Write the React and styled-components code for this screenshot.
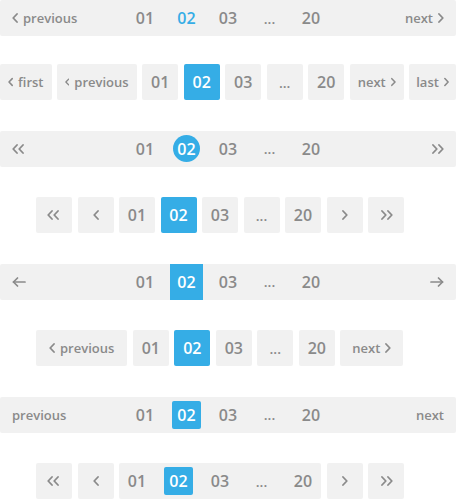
import React from 'react'
import styled, { createGlobalStyle, css } from 'styled-components'

const colors = {
  text: '#8a8a8a',
  tile: '#f1f1f1',
  active: '#35ade6',
  white: '#ffffff',
}

const GlobalStyle = createGlobalStyle`
  html, body {
    margin: 0;
    padding: 0;
    background: #fff;
  }
  body {
    font-family: "Open Sans", "Liberation Sans", sans-serif;
    color: ${colors.text};
  }
`

const Page = styled.div`
  width: 456px;
  display: flex;
  flex-direction: column;
  gap: 30.5px;
`

/* full-width grey strip: links at the ends, pages centred */
const Bar = styled.nav`
  height: 36px;
  display: grid;
  grid-template-columns: 1fr auto 1fr;
  align-items: center;
  background: ${colors.tile};
  border-radius: 2px;
  padding: 0 12px;
  margin-bottom: ${(p) => (p.$tight ? '-2.5px' : '0')};
`

const EndLink = styled.span`
  display: flex;
  align-items: center;
  gap: 5px;
  font-size: 13px;
  font-weight: 600;
  justify-self: ${(p) => (p.$end ? 'end' : 'start')};
`

const Pages = styled.div`
  display: flex;
  align-items: center;
  gap: 5.5px;
  height: 100%;
`

const activeStyles = {
  text: css`
    color: ${colors.active};
  `,
  circle: css`
    &::before {
      content: '';
      position: absolute;
      left: 50%;
      top: 50%;
      width: 27px;
      height: 27px;
      margin: -13.5px 0 0 -13.5px;
      border-radius: 50%;
      background: ${colors.active};
    }
    color: ${colors.white};
  `,
  block: css`
    &::before {
      content: '';
      position: absolute;
      left: 1.5px;
      right: 1.5px;
      top: 0;
      bottom: 0;
      background: ${colors.active};
    }
    color: ${colors.white};
  `,
  chip: css`
    &::before {
      content: '';
      position: absolute;
      left: 50%;
      top: 50%;
      width: 29px;
      height: 28px;
      margin: -14px 0 0 -14.5px;
      border-radius: 2px;
      background: ${colors.active};
    }
    color: ${colors.white};
  `,
}

const Slot = styled.span`
  position: relative;
  width: 36px;
  height: 100%;
  display: flex;
  align-items: center;
  justify-content: center;
  font-size: ${(p) => (p.$gap ? 14 : 16)}px;
  font-weight: 600;

  & > span {
    position: relative;
  }

  ${(p) => p.$active && activeStyles[p.$active]}
`

/* rows of separate tiles */
const TileRow = styled.nav`
  height: 36px;
  display: flex;
  align-items: stretch;
  gap: 5.5px;
  padding-left: ${(p) => p.$indent || 0}px;
`

const Tile = styled.span`
  min-width: 36px;
  box-sizing: border-box;
  padding: 0 ${(p) => p.$pad ?? 0}px;
  display: flex;
  align-items: center;
  justify-content: center;
  gap: 5px;
  background: ${(p) => (p.$active ? colors.active : colors.tile)};
  color: ${(p) => (p.$active ? colors.white : colors.text)};
  border-radius: 2px;
  font-size: ${(p) => (p.$label ? 13 : p.$gap ? 14 : 16)}px;
  font-weight: 600;
`

const TileGroup = styled.span`
  display: flex;
  align-items: center;
  gap: 5.5px;
  background: ${colors.tile};
  border-radius: 2px;
`

const Chevron = ({ dir = 'left', double }) => {
  const w = double ? 14 : 6
  return (
    <svg width={w} height="10" viewBox={`0 0 ${w} 10`}>
      <g
        transform={dir === 'right' ? `scale(-1,1) translate(-${w},0)` : undefined}
        fill="none"
        stroke="currentColor"
        strokeWidth="1.8"
        strokeLinecap="round"
        strokeLinejoin="round"
      >
        <polyline points="5,1 1.2,5 5,9" />
        {double && <polyline points="11,1 7.2,5 11,9" />}
      </g>
    </svg>
  )
}

const Arrow = ({ dir = 'left' }) => (
  <svg width="14" height="10" viewBox="0 0 14 10">
    <g
      transform={dir === 'right' ? 'scale(-1,1) translate(-14,0)' : undefined}
      fill="none"
      stroke="currentColor"
      strokeWidth="1.7"
      strokeLinecap="round"
      strokeLinejoin="round"
    >
      <line x1="1.5" y1="5" x2="13" y2="5" />
      <polyline points="5.5,1 1.5,5 5.5,9" />
    </g>
  </svg>
)

const numbers = ['01', '02', '03', '...', '20']

const PageSlots = ({ active }) =>
  numbers.map((n) => (
    <Slot key={n} $gap={n === '...'} $active={n === '02' ? active : undefined}>
      <span>{n}</span>
    </Slot>
  ))

const PageTiles = () =>
  numbers.map((n) => (
    <Tile key={n} $gap={n === '...'} $active={n === '02'}>
      {n}
    </Tile>
  ))

export default function App() {
  return (
    <Page>
      <GlobalStyle />

      <Bar $tight>
        <EndLink>
          <Chevron /> previous
        </EndLink>
        <Pages>
          <PageSlots active="text" />
        </Pages>
        <EndLink $end>
          next <Chevron dir="right" />
        </EndLink>
      </Bar>

      <TileRow>
        <Tile $label $pad={8}>
          <Chevron /> first
        </Tile>
        <Tile $label $pad={8}>
          <Chevron /> previous
        </Tile>
        <PageTiles />
        <Tile $label $pad={8}>
          next <Chevron dir="right" />
        </Tile>
        <Tile $label $pad={7}>
          last <Chevron dir="right" />
        </Tile>
      </TileRow>

      <Bar>
        <EndLink>
          <Chevron double />
        </EndLink>
        <Pages>
          <PageSlots active="circle" />
        </Pages>
        <EndLink $end>
          <Chevron double dir="right" />
        </EndLink>
      </Bar>

      <TileRow $indent={36}>
        <Tile>
          <Chevron double />
        </Tile>
        <Tile>
          <Chevron />
        </Tile>
        <PageTiles />
        <Tile>
          <Chevron dir="right" />
        </Tile>
        <Tile>
          <Chevron double dir="right" />
        </Tile>
      </TileRow>

      <Bar>
        <EndLink>
          <Arrow />
        </EndLink>
        <Pages>
          <PageSlots active="block" />
        </Pages>
        <EndLink $end>
          <Arrow dir="right" />
        </EndLink>
      </Bar>

      <TileRow $indent={36}>
        <Tile $label $pad={13}>
          <Chevron /> previous
        </Tile>
        <PageTiles />
        <Tile $label $pad={12}>
          next <Chevron dir="right" />
        </Tile>
      </TileRow>

      <Bar>
        <EndLink>previous</EndLink>
        <Pages>
          <PageSlots active="chip" />
        </Pages>
        <EndLink $end>next</EndLink>
      </Bar>

      <TileRow $indent={36}>
        <Tile>
          <Chevron double />
        </Tile>
        <Tile>
          <Chevron />
        </Tile>
        <TileGroup>
          <PageSlots active="chip" />
        </TileGroup>
        <Tile>
          <Chevron dir="right" />
        </Tile>
        <Tile>
          <Chevron double dir="right" />
        </Tile>
      </TileRow>
    </Page>
  )
}
